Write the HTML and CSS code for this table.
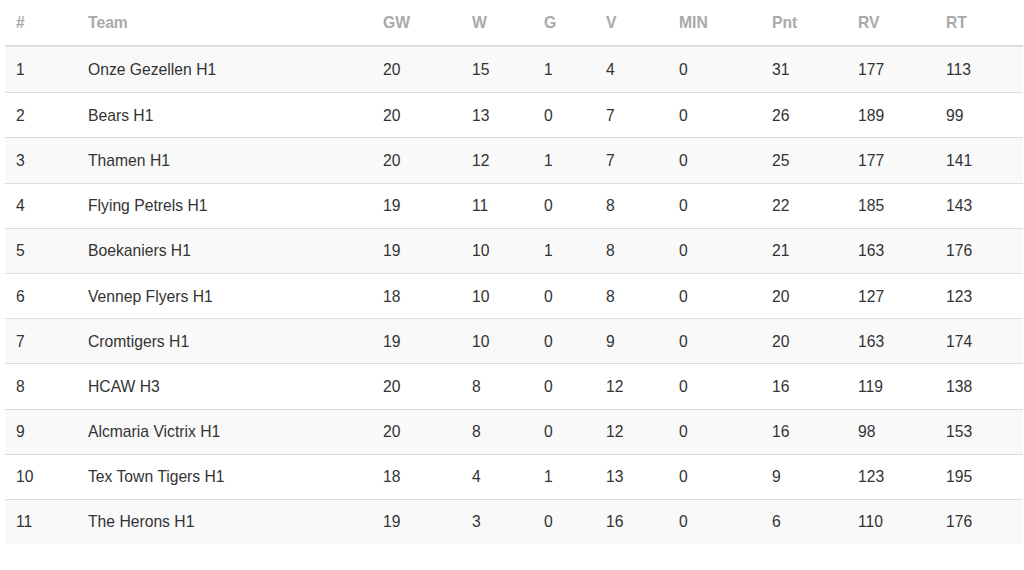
FILE: index.html
```html
<!DOCTYPE html>
<html lang="nl">
<head>
<meta charset="utf-8">
<title>Stand</title>
<link rel="stylesheet" href="styles.css">
</head>
<body>
<div class="wrap">
<table class="standings">
<thead>
<tr>
<th class="c-pos">#</th>
<th class="c-team">Team</th>
<th class="c-gw">GW</th>
<th class="c-w">W</th>
<th class="c-g">G</th>
<th class="c-v">V</th>
<th class="c-min">MIN</th>
<th class="c-pnt">Pnt</th>
<th class="c-rv">RV</th>
<th class="c-rt">RT</th>
</tr>
</thead>
<tbody>
<tr><td>1</td><td>Onze Gezellen H1</td><td>20</td><td>15</td><td>1</td><td>4</td><td>0</td><td>31</td><td>177</td><td>113</td></tr>
<tr><td>2</td><td>Bears H1</td><td>20</td><td>13</td><td>0</td><td>7</td><td>0</td><td>26</td><td>189</td><td>99</td></tr>
<tr><td>3</td><td>Thamen H1</td><td>20</td><td>12</td><td>1</td><td>7</td><td>0</td><td>25</td><td>177</td><td>141</td></tr>
<tr><td>4</td><td>Flying Petrels H1</td><td>19</td><td>11</td><td>0</td><td>8</td><td>0</td><td>22</td><td>185</td><td>143</td></tr>
<tr><td>5</td><td>Boekaniers H1</td><td>19</td><td>10</td><td>1</td><td>8</td><td>0</td><td>21</td><td>163</td><td>176</td></tr>
<tr><td>6</td><td>Vennep Flyers H1</td><td>18</td><td>10</td><td>0</td><td>8</td><td>0</td><td>20</td><td>127</td><td>123</td></tr>
<tr><td>7</td><td>Cromtigers H1</td><td>19</td><td>10</td><td>0</td><td>9</td><td>0</td><td>20</td><td>163</td><td>174</td></tr>
<tr><td>8</td><td>HCAW H3</td><td>20</td><td>8</td><td>0</td><td>12</td><td>0</td><td>16</td><td>119</td><td>138</td></tr>
<tr><td>9</td><td>Alcmaria Victrix H1</td><td>20</td><td>8</td><td>0</td><td>12</td><td>0</td><td>16</td><td>98</td><td>153</td></tr>
<tr><td>10</td><td>Tex Town Tigers H1</td><td>18</td><td>4</td><td>1</td><td>13</td><td>0</td><td>9</td><td>123</td><td>195</td></tr>
<tr><td>11</td><td>The Herons H1</td><td>19</td><td>3</td><td>0</td><td>16</td><td>0</td><td>6</td><td>110</td><td>176</td></tr>
</tbody>
</table>
</div>
</body>
</html>
```

FILE: styles.css
```css
html, body {
  margin: 0;
  padding: 0;
  background: #fff;
}
body {
  font-family: "Liberation Sans", Arial, Helvetica, sans-serif;
  font-size: 15.7px;
  color: #333;
}
.wrap {
  padding: 0 1px 0 5px;
}
.standings {
  width: 1018px;
  border-collapse: collapse;
  border-spacing: 0;
  table-layout: fixed;
}
.standings th,
.standings td {
  text-align: left;
  padding: 0 0 0 11px;
  line-height: 20px;
  vertical-align: middle;
  white-space: nowrap;
}
.standings th {
  height: 45px;
  font-weight: bold;
  color: #aaaaaa;
  border-bottom: 2px solid #dddddd;
}
.standings td {
  height: 43.2px;
  padding-top: 1px;
  border-top: 1px solid #dddddd;
}
.standings thead + tbody tr:first-child td {
  border-top: 0;
  height: 44.2px;
}
.standings tbody tr:nth-child(odd) td {
  background: #f9f9f9;
}
.c-pos { width: 61px; }
.c-team { width: 284px; }
.c-gw { width: 78px; }
.c-w { width: 61px; }
.c-g { width: 51px; }
.c-v { width: 62px; }
.c-min { width: 82px; }
.c-pnt { width: 75px; }
.c-rv { width: 77px; }
.c-rt { width: 77px; }
```
